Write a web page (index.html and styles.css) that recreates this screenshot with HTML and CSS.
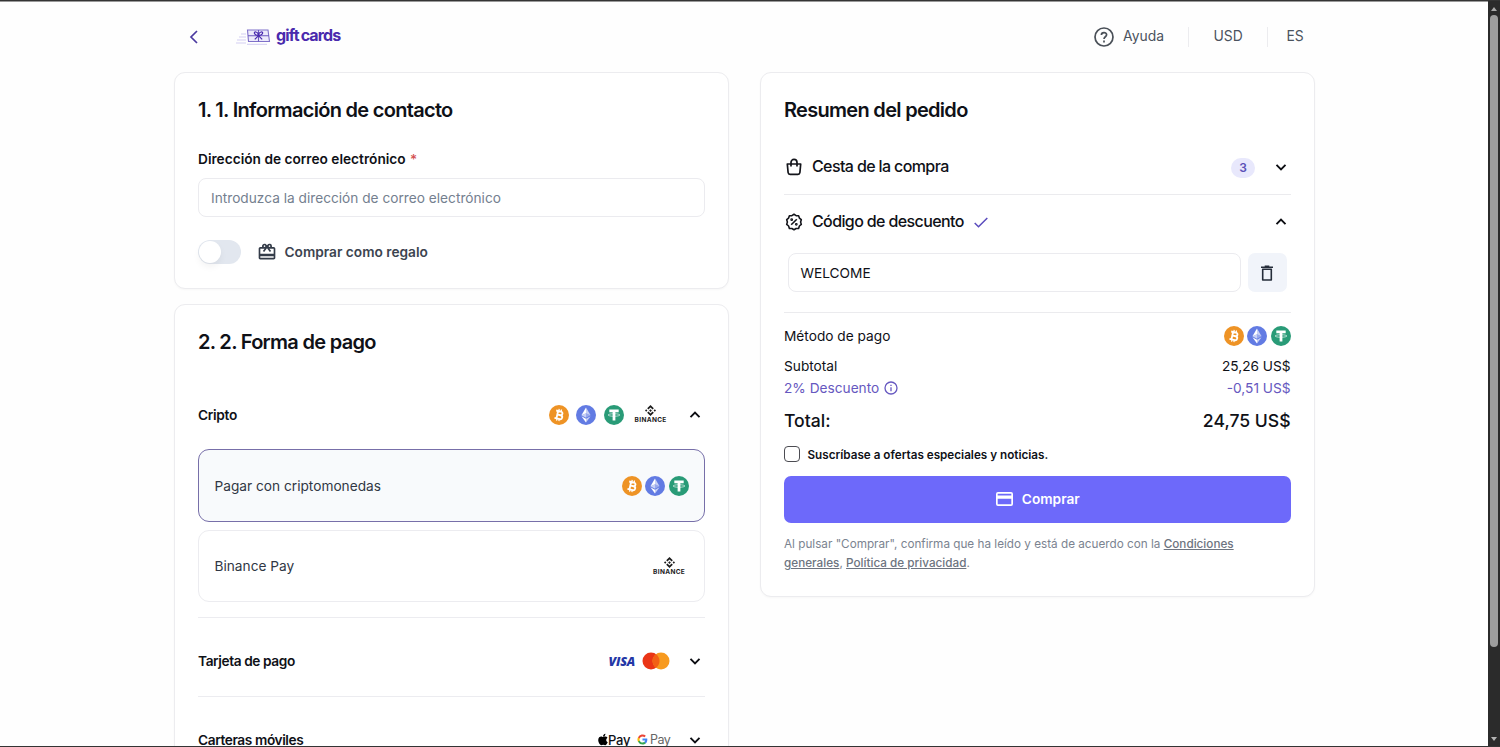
FILE: index.html
```html
<!DOCTYPE html>
<html lang="es">
<head>
<meta charset="utf-8">
<title>Gift cards</title>
<link rel="stylesheet" href="styles.css">
</head>
<body>
<svg class="defs" width="0" height="0">
  <symbol id="btc" viewBox="0 0 32 32"><circle cx="16" cy="16" r="16" fill="#ee9325"/><g transform="rotate(13 16 16)" fill="none" stroke="#fff" stroke-width="3"><path d="M10 10h8a2.900 2.900 0 0 1 0 5.800H12.500h6.200a3.200 3.200 0 0 1 0 6.400H10M13.200 10v12.200"/><path d="M14.200 6.500V10M18 6.500V10M14.200 22V25.500M18 22V25.500" stroke-width="2"/></g></symbol>
  <symbol id="eth" viewBox="0 0 32 32"><circle cx="16" cy="16" r="16" fill="#627be3"/><path d="M16 4v9l7.3 3.3z" fill="#fff" opacity=".65"/><path d="M16 4 8.7 16.3 16 13z" fill="#fff"/><path d="M16 21.9V28l7.3-10.2z" fill="#fff" opacity=".65"/><path d="M16 28v-6.1l-7.3-4.1z" fill="#fff"/><path d="m16 20.5 7.3-4.2L16 13z" fill="#fff" opacity=".35"/><path d="M8.7 16.3 16 20.5V13z" fill="#fff" opacity=".65"/></symbol>
  <symbol id="usdt" viewBox="0 0 32 32"><circle cx="16" cy="16" r="16" fill="#299b77"/><path d="M8.5 7.2h15v4.2h-5.3v13.4h-4.4V11.400H8.500z" fill="#fff"/><ellipse cx="16" cy="16" rx="9.500" ry="2" fill="none" stroke="#fff" stroke-width="1"/></symbol>
  <symbol id="bnb" viewBox="0 0 24 24"><g fill="#1c1c1c"><path d="M12 0 4.800 7.200 7.400 9.800 12 5.200l4.600 4.600 2.600-2.600zM12 24l-7.200-7.200 2.600-2.600 4.600 4.600 4.600-4.600 2.600 2.600zM2.600 9.400 0 12l2.600 2.600L5.200 12zM21.400 9.400 18.800 12l2.600 2.600L24 12zM12 9 9 12l3 3 3-3z"/></g></symbol>
  <symbol id="down" viewBox="0 0 12 12"><path d="m1.500 3.800 4.500 4.500 4.500-4.500" fill="none" stroke="#0c0d12" stroke-width="1.900"/></symbol>
  <symbol id="up" viewBox="0 0 12 12"><path d="M1.500 8.200 6 3.700l4.500 4.500" fill="none" stroke="#0c0d12" stroke-width="1.900"/></symbol>
</svg>
<div class="window">
  <div class="page">
    <header class="header">
      <svg class="back" viewBox="0 0 10 14"><path d="M8 1 2 7l6 6" fill="none" stroke="#4b3aa0" stroke-width="1.700"/></svg>
      <svg class="logo" viewBox="0 0 35 18" fill="none">
        <path d="M5 6h5M3 9h7M1 12h9M0 15h10M11 16.300h20" stroke="#d3cef2" stroke-width="1"/>
        <path d="M11.500 2h20.500l1.500 11.500h-21z" fill="#eceafb" stroke="#7f70c9" stroke-width="1.100"/>
        <path d="M12 7.700h21M22.500 2v11.500" stroke="#6a57c0" stroke-width="1.100"/>
        <path d="M22.500 7.500c-5-.5-5-4-2.500-3.500 2 .3 2.500 3.500 2.500 3.500s.5-3.200 2.500-3.500c2.500-.5 2.500 3-2.500 3.500zM22.300 7.800l-3.500 3.500M22.700 7.800l3.500 3.500" stroke="#4829af" stroke-width="1.200"/>
      </svg>
      <span class="brand">gift<span class="brand-second">cards</span></span>
      <nav class="nav">
        <svg class="help" viewBox="0 0 20 20" fill="none" stroke="#4a5058" stroke-width="1.700"><circle cx="10" cy="10" r="9"/><path d="M7.400 8c0-3.200 5.200-3.200 5.200-.2 0 1.900-2.600 2-2.600 4.200"/><path d="M10 13.500v1.900"/></svg>
        <span class="nav-help">Ayuda</span><i class="nav-line"></i><span class="nav-usd">USD</span><i class="nav-line"></i><span class="nav-es">ES</span>
      </nav>
    </header>
    <main class="columns">
      <div class="left">
        <section class="card contact">
          <h2 class="title">1. 1. Información de contacto</h2>
          <label class="label">Dirección de correo electrónico <span class="required">*</span></label>
          <div class="input email">Introduzca la dirección de correo electrónico</div>
          <div class="gift">
            <span class="toggle"></span>
            <svg class="gift-icon" viewBox="0 0 24 24" fill="#343c49"><path d="M20 6h-2.180c.11-.31.18-.65.18-1a2.996 2.996 0 0 0-5.500-1.650l-.5.670-.5-.68C10.960 2.540 10.050 2 9 2 7.340 2 6 3.340 6 5c0 .35.070.690.180 1H4c-1.110 0-1.990.890-1.990 2L2 19c0 1.110.890 2 2 2h16c1.110 0 2-.89 2-2V8c0-1.110-.89-2-2-2zm-5-2c.55 0 1 .45 1 1s-.45 1-1 1-1-.45-1-1 .45-1 1-1zM9 4c.55 0 1 .45 1 1s-.45 1-1 1-1-.45-1-1 .45-1 1-1zm11 15H4v-2h16v2zm0-5H4V8h5.080L7 10.830 8.620 12 12 7.400l3.380 4.600L17 10.830 14.920 8H20v6z"/></svg>
            <span class="gift-text">Comprar como regalo</span>
          </div>
        </section>
        <section class="card payment">
          <h2 class="title">2. 2. Forma de pago</h2>
          <div class="method method-crypto"><b class="method-name">Cripto</b>
            <span class="coins coins-wide"><svg><use href="#btc"/></svg><svg><use href="#eth"/></svg><svg><use href="#usdt"/></svg></span>
            <span class="binance"><svg><use href="#bnb"/></svg>BINANCE</span>
            <svg class="chevron"><use href="#up"/></svg></div>
          <div class="option selected"><span>Pagar con criptomonedas</span><span class="coins"><svg><use href="#btc"/></svg><svg><use href="#eth"/></svg><svg><use href="#usdt"/></svg></span></div>
          <div class="option option-binance"><span>Binance Pay</span><span class="binance"><svg><use href="#bnb"/></svg>BINANCE</span></div>
          <div class="method method-card"><b class="method-name">Tarjeta de pago</b><span class="visa">VISA</span>
            <svg class="mastercard" viewBox="0 0 28 18"><circle cx="9" cy="9" r="8.500" fill="#ea3516"/><circle cx="19" cy="9" r="8.500" fill="#f79a1f"/><path d="M14 2.130a8.500 8.500 0 0 1 0 13.740 8.500 8.500 0 0 1 0-13.740z" fill="#f26016"/></svg>
            <svg class="chevron"><use href="#down"/></svg></div>
          <div class="method method-wallet"><b class="method-name">Carteras móviles</b>
            <svg class="apple" viewBox="0 0 384 512"><path d="M319 269c0-37 16-65 50-85-19-27-47-42-85-45-35-3-74 21-88 21-15 0-49-20-76-20C64 141 4 185 4 273c0 26 5 53 14 81 13 37 58 127 106 126 25-1 43-18 75-18 31 0 48 18 76 18 48-1 90-83 102-120-65-30-58-90-58-91zM262 104c28-32 25-62 24-72-24 1-52 16-68 35-18 20-28 45-26 72 26 2 50-11 70-35z"/></svg><span class="apple-text">Pay</span>
            <svg class="google" viewBox="0 0 24 24"><path fill="#4285f4" d="M22.500 12.300c0-.8-.1-1.600-.2-2.300H12v4.300h5.900a5 5 0 0 1-2.200 3.300v2.800h3.600c2.100-1.900 3.200-4.700 3.200-8.100z"/><path fill="#34a853" d="M12 23c3 0 5.500-1 7.300-2.700l-3.600-2.800c-3.400 2.200-8.200.9-9.900-3.400H2.200v2.900A11 11 0 0 0 12 23z"/><path fill="#fbbc05" d="M5.800 14.100a6.700 6.700 0 0 1 0-4.200V7.100H2.200a11 11 0 0 0 0 9.900z"/><path fill="#ea4335" d="M12 5.400c1.600 0 3.100.6 4.200 1.600l3.100-3.100A11 11 0 0 0 2.200 7.100l3.600 2.800A6.600 6.600 0 0 1 12 5.400z"/></svg><span class="google-text">Pay</span>
            <svg class="chevron"><use href="#down"/></svg></div>
        </section>
      </div>
      <section class="card summary">
        <h2 class="title">Resumen del pedido</h2>
        <div class="fold basket">
          <svg class="fold-icon" viewBox="0 0 18 18" fill="none" stroke="#14151b" stroke-width="1.700"><path d="M2.300 6h13.400l-.8 8.500a2 2 0 0 1-2 1.800H5.100a2 2 0 0 1-2-1.800zM6 8.500V4.400a3 3 0 0 1 6 0v4.100" stroke-linejoin="round"/></svg>
          <span class="fold-text">Cesta de la compra</span><span class="count">3</span><svg class="chevron"><use href="#down"/></svg></div>
        <div class="fold code">
          <svg class="fold-icon" viewBox="0 0 18 18" fill="none" stroke="#14151b" stroke-width="1.600"><path d="m9 1.300 2.100 1.300 2.500.1.800 2.400 1.900 1.600-.7 2.300.7 2.400-1.900 1.600-.8 2.400-2.500.1L9 16.800l-2.100-1.300-2.500-.1-.8-2.400-1.900-1.600.7-2.400-.7-2.300 1.900-1.600.8-2.400 2.500-.1z" stroke-linejoin="round"/><path d="m6.200 11.800 5.600-5.600"/><circle cx="6.700" cy="6.700" r=".6"/><circle cx="11.300" cy="11.300" r=".6"/></svg>
          <span class="fold-text">Código de descuento</span>
          <svg class="check" viewBox="0 0 14 11"><path d="m.7 6 3.800 3.800L13.300 1" fill="none" stroke="#5a4bbd" stroke-width="1.500"/></svg>
          <svg class="chevron"><use href="#up"/></svg></div>
        <div class="coupon"><div class="input coupon-input">WELCOME</div><button class="trash"><svg viewBox="0 0 14 16" fill="none" stroke="#252d3a" stroke-width="1.600"><path d="M1 2.300h12M4.700 1.300h4.600"/><path d="M2.700 4.300v10.700h8.600V4.300z" stroke-linejoin="round"/></svg></button></div>
        <div class="row row-method"><span>Método de pago</span><span class="coins"><svg><use href="#btc"/></svg><svg><use href="#eth"/></svg><svg><use href="#usdt"/></svg></span></div>
        <div class="row row-subtotal"><span>Subtotal</span><span>25,26 US$</span></div>
        <div class="row discount"><span class="discount-name">2% Descuento<svg viewBox="0 0 14 14" fill="none" stroke="#6658c0" stroke-width="1.300"><circle cx="7" cy="7" r="6"/><path d="M7 6.300v4M7 3.700v1.300"/></svg></span><span>-0,51 US$</span></div>
        <div class="row total"><span>Total:</span><span>24,75 US$</span></div>
        <div class="subscribe"><i class="box"></i><span>Suscríbase a ofertas especiales y noticias.</span></div>
        <button class="buy"><svg viewBox="0 0 17 14"><path d="M2 0h13a2 2 0 0 1 2 2v10a2 2 0 0 1-2 2H2a2 2 0 0 1-2-2V2a2 2 0 0 1 2-2zm-.3 1.700v1.800h13.600V1.700zm0 5v5.600h13.600V6.700z" fill="#fff" fill-rule="evenodd"/></svg><span>Comprar</span></button>
        <p class="legal">Al pulsar "Comprar", confirma que ha leído y está de acuerdo con la <u>Condiciones</u><br><u>generales</u>, <u>Política de privacidad</u>.</p>
      </section>
    </main>
  </div>
  <aside class="scrollbar"><i class="arrow-up"></i><i class="thumb"></i><i class="arrow-down"></i></aside>
</div>
</body>
</html>
```

FILE: styles.css
```css
* { box-sizing: border-box; }
body { margin: 0; font-family: Inter, "Liberation Sans", sans-serif; color: #0f1117; overflow: hidden; }
.defs { display: block; height: 0; }
svg { display: block; flex: none; }
button { border: 0; padding: 0; font: inherit; }
span { white-space: nowrap; }
.window { display: flex; height: 747px; border-top: 1px solid #343434; border-bottom: 1px solid #343434; }
.page { width: 1488px; height: 745px; overflow: hidden; border-top: 1px solid #999; background: #fefefe; }
.scrollbar { width: 12px; background: #2b2b2b; display: flex; flex-direction: column; align-items: center; padding: 6px 0 5px; }
.arrow-up, .arrow-down { border: 3px solid transparent; border-top-width: 0; border-bottom: 4px solid #aaa; }
.arrow-down { border-top: 4px solid #b4b4b4; border-bottom-width: 0; margin-top: auto; }
.thumb { width: 8px; height: 632px; margin-top: 4px; border-radius: 4px; background: #9e9e9e; }

.header { height: 70px; padding-left: 189px; display: flex; align-items: center; }
.back { width: 10px; height: 14px; }
.logo { width: 35px; height: 18px; margin-left: 37px; }
.brand { margin-left: 5px; margin-top: -4px; font-size: 16px; font-weight: 650; letter-spacing: -.85px; color: #4a2aad; line-height: 20px; }
.brand-second { margin-left: 2px; }
.nav { margin-left: auto; width: 394px; padding-bottom: 1px; display: flex; align-items: center; font-size: 13.900px; color: #4b535e; }
.nav span { padding-bottom: 1px; }
.help { width: 20px; height: 20px; margin-right: 9px; }
.nav-help { width: 65px; }
.nav-line { width: 1px; height: 20px; margin-top: 1px; background: #ececef; }
.nav-usd { width: 78px; padding-left: 24.500px; }
.nav-es { padding-left: 18.500px; }

.columns { display: flex; gap: 31px; padding-left: 174px; align-items: flex-start; }
.left { width: 555px; display: flex; flex-direction: column; gap: 15px; }
.card { border: 1px solid #ececef; border-radius: 11px; background: #fff; padding: 19px 23.400px 0 23px; box-shadow: 0 1px 2px rgba(0,0,0,.03); }
.title { margin: 0; height: 36px; line-height: 36px; font-size: 20px; font-weight: 600; letter-spacing: -.7px; white-space: nowrap; }
.contact { height: 217px; }
.label { display: block; margin-top: 21px; font-size: 13.700px; font-weight: 600; line-height: 20px; }
.required { color: #d35050; font-weight: 500; margin-left: 1px; }
.input { border: 1px solid #ebebef; border-radius: 8px; height: 39px; display: flex; align-items: center; padding: 1px 12px 0; font-size: 13.700px; }
.email { margin-top: 9px; color: #74808f; }
.gift { margin-top: 22px; display: flex; align-items: center; height: 26px; }
.toggle { width: 43px; height: 24px; border-radius: 12px; background: #e2e7ef; padding: 1px; }
.toggle::before { content: ""; display: block; width: 22px; height: 22px; border-radius: 50%; background: #fff; box-shadow: 0 4px 7px rgba(0,0,0,.05); }
.gift-icon { width: 20px; height: 20px; margin: 0 8px 0 15.500px; }
.gift-text { font-size: 13.700px; font-weight: 600; color: #3c4450; padding-bottom: 1px; }

.payment { height: 560px; }
.method { display: flex; align-items: center; }
.method-name { margin-right: auto; font-size: 13.700px; font-weight: 600; letter-spacing: -.4px; }
.method-crypto { height: 41px; margin-top: 34px; }
.method-crypto .method-name { letter-spacing: -.3px; }
.chevron { width: 12px; height: 12px; margin-right: 3.500px; }
.coins { display: flex; gap: 3.500px; }
.coins svg { width: 20px; height: 20px; }
.coins-wide { gap: 7.500px; }
.binance { display: flex; flex-direction: column; align-items: center; width: 32px; font-size: 6.500px; line-height: 7px; font-weight: 700; letter-spacing: .35px; color: #222; gap: 1px; }
.binance svg { width: 11px; height: 11px; }
.method-crypto .binance { margin: 0 22.500px 0 11px; }
.option { height: 72px; margin-top: 8px; padding: 0 18.500px 0 15.500px; display: flex; align-items: center; justify-content: space-between; border: 1px solid #ececf0; border-radius: 11px; font-size: 13.700px; color: #303744; font-weight: 430; }
.option-binance .binance { padding-top: 1px; }
.option-binance > :first-child { padding-bottom: 1px; }
.selected { height: 73px; margin-top: 14px; padding-right: 15px; border-color: #776fa9; background: #f8fafc; }
.method-card { height: 80px; margin-top: 15px; padding-top: 8px; border-top: 1px solid #ececf0; border-bottom: 1px solid #ececf0; }
.method-card .method-name { padding-bottom: 1px; }
.method-wallet { height: 86px; }
.method-wallet .method-name { padding-bottom: 1px; }
.visa { font-family: "Open Sans", sans-serif; font-size: 12.500px; font-weight: 800; font-style: italic; color: #2437a6; letter-spacing: -.2px; }
.mastercard { width: 28px; height: 18px; margin: 0 19px 0 7px; }
.apple { width: 10px; height: 13px; margin-bottom: 2px; }
.apple-text { font-size: 13px; font-weight: 500; letter-spacing: -.3px; margin: 0 7px 1px 0; }
.google { width: 11px; height: 11px; margin: 0 2px 1px 0; }
.google-text { font-size: 12.500px; color: #666; letter-spacing: -.6px; margin: 0 19px 1px 0; }

.summary { width: 555px; height: 524.500px; }
.fold { display: flex; align-items: center; }
.basket { height: 67px; padding-top: 12px; border-bottom: 1px solid #ebebee; }
.fold-icon { width: 18px; height: 18px; margin: 0 9px 0 1px; }
.fold-text { padding-bottom: 2px; font-size: 16px; font-weight: 450; letter-spacing: -.62px; }
.count { margin: 2px 20px 0 auto; width: 24px; height: 20px; border-radius: 10px; background: #e8e8fc; color: #5a51b8; font-size: 12px; line-height: 20px; font-weight: 600; text-align: center; }
.code { height: 54px; }
.check { width: 14px; height: 11px; margin-left: 10px; margin-right: auto; }
.coupon { display: flex; align-items: center; gap: 7px; height: 60px; padding: 0 3px 20px 4px; margin-top: 4px; border-bottom: 1px solid #ebebee; }
.coupon-input { width: 453px; flex: none; padding-left: 11.500px; }
.trash { width: 38.500px; height: 39px; flex: none; border-radius: 7px; background: #f1f4fa; display: flex; align-items: center; justify-content: center; }
.trash svg { width: 14px; height: 16px; }
.row { display: flex; align-items: center; justify-content: space-between; height: 22px; font-size: 13.700px; }
.row-method { height: 41px; margin-top: 2px; }
.row-method > :first-child { padding-top: 1px; }
.row-subtotal { margin-top: -1px; }
.discount { color: #6658c0; }
.discount-name { display: flex; align-items: center; gap: 5px; }
.discount-name svg { width: 14px; height: 14px; }
.total { height: 42px; font-size: 17.600px; font-weight: 470; }
.subscribe { height: 18px; margin-top: 4px; display: flex; align-items: center; gap: 7.500px; font-size: 11.700px; font-weight: 600; }
.subscribe span { padding-top: 1px; }
.box { width: 16px; height: 16px; border: 1px solid #4c4c52; border-radius: 4px; }
.buy { width: 100%; height: 47px; margin-top: 13px; padding: 0 0 1px 1px; display: flex; align-items: center; justify-content: center; gap: 9px; border-radius: 7px; background: #6d69fa; color: #fff; font-size: 13.700px; font-weight: 600; }
.buy svg { width: 17px; height: 14px; }
.legal { margin: 12px 0 0; font-size: 11.720px; line-height: 18.500px; color: #7b8390; white-space: nowrap; }
.legal u { color: #6d7480; font-weight: 500; }
```
